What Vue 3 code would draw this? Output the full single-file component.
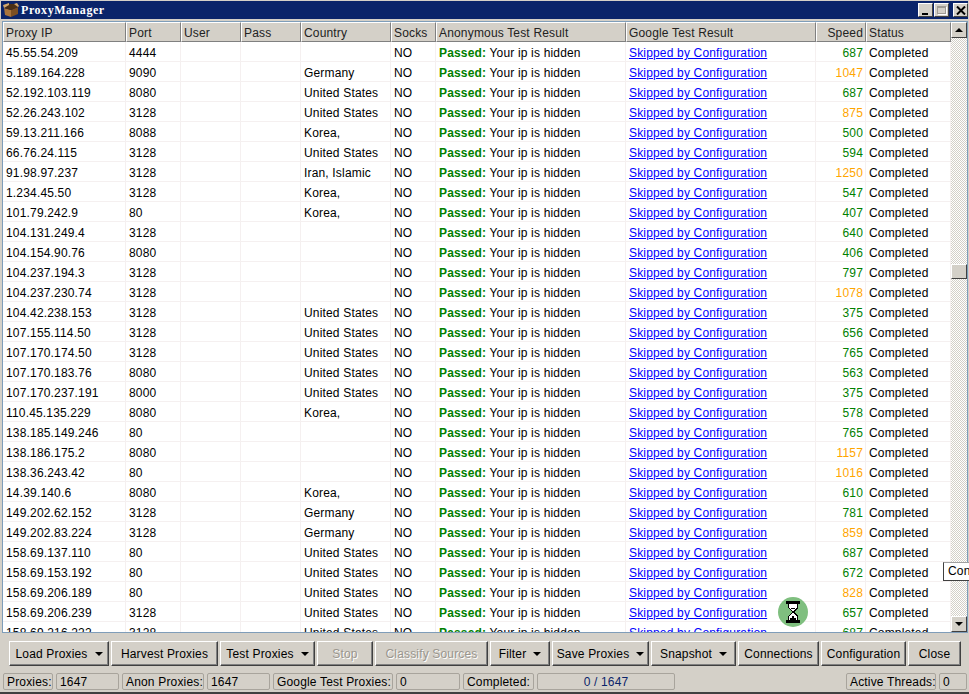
<template>
  <div class="win">
    <div class="titlebar">
      <svg class="app-icon" width="16" height="16" viewBox="0 0 16 16">
        <path d="M1 6 L8 8 L8 15 L2 13 Z" fill="#a8743c" />
        <path d="M8 8 L15 5 L15 12 L8 15 Z" fill="#7c4f22" />
        <path d="M1 6 L6 2 L12 2 L15 5 L8 8 Z" fill="#4a2f14" />
        <path d="M1 6 L0 3 L6 1 L6 3 Z" fill="#d2a76c" />
        <path d="M11 2 L14 1 L16 4 L15 5 Z" fill="#d2a76c" />
      </svg>
      <span class="title">ProxyManager</span>
      <div class="caption-btns">
        <span class="cap"><i class="min-glyph"></i></span>
        <span class="cap cap-max"><i class="max-glyph"></i></span>
        <span class="cap cap-close">
          <svg width="10" height="9" viewBox="0 0 10 9"><path d="M1 0.5 L9 8.5 M9 0.5 L1 8.5" stroke="#000" stroke-width="2" /></svg>
        </span>
      </div>
    </div>

    <div class="panel">
      <div class="table">
        <div class="thead">
          <div v-for="c in columns" :key="c.label" class="th" :class="{ right: c.right }">{{ c.label }}</div>
        </div>
        <div class="tbody">
          <div v-for="r in rows" :key="r.ip" class="tr">
            <div class="td">{{ r.ip }}</div>
            <div class="td">{{ r.port }}</div>
            <div class="td"></div>
            <div class="td"></div>
            <div class="td">{{ r.country }}</div>
            <div class="td">NO</div>
            <div class="td"><b class="passed">Passed:</b> Your ip is hidden</div>
            <div class="td"><a class="link">Skipped by Configuration</a></div>
            <div class="td right" :class="r.speed >= 800 ? 'slow' : 'fast'">{{ r.speed }}</div>
            <div class="td">Completed</div>
          </div>
        </div>
      </div>
      <div class="scrollbar">
        <span class="sb-btn"><i class="arrow-up"></i></span>
        <div class="sb-track"><span class="sb-thumb"></span></div>
        <span class="sb-btn"><i class="arrow-down"></i></span>
      </div>
    </div>

    <div class="toolbar">
      <button v-for="b in buttons" :key="b.label" class="btn" :class="b.cls" :disabled="b.disabled">
        <span>{{ b.label }}</span>
        <i v-if="b.menu" class="caret"></i>
      </button>
    </div>

    <div class="statusbar">
      <span class="cell s-proxies">Proxies:</span>
      <span class="cell s-val1">1647</span>
      <span class="cell s-anon">Anon Proxies:</span>
      <span class="cell s-val1">1647</span>
      <span class="cell s-google">Google Test Proxies:</span>
      <span class="cell s-val2">0</span>
      <span class="cell s-done">Completed:</span>
      <span class="cell s-progress">0 / 1647</span>
      <span class="s-spacer"></span>
      <span class="cell s-active">Active Threads:</span>
      <span class="cell s-threads">0</span>
    </div>

    <div class="tooltip">Configuration</div>
    <div class="busy">
      <svg width="16" height="22" viewBox="0 0 16 22" shape-rendering="crispEdges">
        <path d="M1 0 H15 V3 H13 V7 L9 11 L13 15 V19 H15 V22 H1 V19 H3 V15 L7 11 L3 7 V3 H1 Z" fill="#000" />
        <path d="M4 3 H12 V7 L8 10 L4 7 Z" fill="#fff" />
        <path d="M4 15 L8 12 L12 15 V19 H4 Z" fill="#fff" />
        <path d="M6 7 H10 V8 H6 Z M5 17 H11 V19 H5 Z M7 15 H9 V17 H7 Z" fill="#000" />
      </svg>
    </div>
  </div>
</template>

<script setup>
const US = 'United States'

const columns = [
  { label: 'Proxy IP' },
  { label: 'Port' },
  { label: 'User' },
  { label: 'Pass' },
  { label: 'Country' },
  { label: 'Socks' },
  { label: 'Anonymous Test Result' },
  { label: 'Google Test Result' },
  { label: 'Speed', right: true },
  { label: 'Status' },
]

const rows = [
  ['45.55.54.209', 4444, '', 687],
  ['5.189.164.228', 9090, 'Germany', 1047],
  ['52.192.103.119', 8080, US, 687],
  ['52.26.243.102', 3128, US, 875],
  ['59.13.211.166', 8088, 'Korea,', 500],
  ['66.76.24.115', 3128, US, 594],
  ['91.98.97.237', 3128, 'Iran, Islamic', 1250],
  ['1.234.45.50', 3128, 'Korea,', 547],
  ['101.79.242.9', 80, 'Korea,', 407],
  ['104.131.249.4', 3128, '', 640],
  ['104.154.90.76', 8080, '', 406],
  ['104.237.194.3', 3128, '', 797],
  ['104.237.230.74', 3128, '', 1078],
  ['104.42.238.153', 3128, US, 375],
  ['107.155.114.50', 3128, US, 656],
  ['107.170.174.50', 3128, US, 765],
  ['107.170.183.76', 8080, US, 563],
  ['107.170.237.191', 8000, US, 375],
  ['110.45.135.229', 8080, 'Korea,', 578],
  ['138.185.149.246', 80, '', 765],
  ['138.186.175.2', 8080, '', 1157],
  ['138.36.243.42', 80, '', 1016],
  ['14.39.140.6', 8080, 'Korea,', 610],
  ['149.202.62.152', 3128, 'Germany', 781],
  ['149.202.83.224', 3128, 'Germany', 859],
  ['158.69.137.110', 80, US, 687],
  ['158.69.153.192', 80, US, 672],
  ['158.69.206.189', 80, US, 828],
  ['158.69.206.239', 3128, US, 657],
  ['158.69.216.222', 3128, US, 687],
].map(([ip, port, country, speed]) => ({ ip, port, country, speed }))

const buttons = [
  { label: 'Load Proxies', menu: true, cls: 'b-load' },
  { label: 'Harvest Proxies', cls: 'b-harvest' },
  { label: 'Test Proxies', menu: true, cls: 'b-test' },
  { label: 'Stop', disabled: true, cls: 'b-stop' },
  { label: 'Classify Sources', disabled: true, cls: 'b-classify' },
  { label: 'Filter', menu: true, cls: 'b-filter' },
  { label: 'Save Proxies', menu: true, cls: 'b-save' },
  { label: 'Snapshot', menu: true, cls: 'b-snap' },
  { label: 'Connections', cls: 'b-conn' },
  { label: 'Configuration', cls: 'b-config' },
  { label: 'Close', cls: 'b-close' },
]
</script>

<style>
html, body { margin: 0; overflow: hidden; background: #d4d0c8; }
</style>

<style scoped>
.win {
  position: relative;
  width: 969px;
  height: 694px;
  box-sizing: border-box;
  display: flex;
  flex-direction: column;
  overflow: hidden;
  background: #d4d0c8;
  border-bottom: 2px solid #404040;
  padding-top: 1px;
  font-family: "Liberation Sans", Arial, sans-serif;
  font-size: 12px;
  letter-spacing: 0.17px;
  color: #000;
}

.titlebar {
  height: 18px;
  margin: 0 1px;
  background: #0a246a;
  display: flex;
  align-items: center;
  padding-left: 2px;
}
.app-icon { flex: none; }
.title {
  margin-left: 2px;
  color: #fff;
  font-family: "Liberation Serif", serif;
  font-weight: bold;
  font-size: 12px;
  letter-spacing: 0.55px;
}
.caption-btns { margin-left: auto; display: flex; gap: 1px; }
.cap {
  width: 15px;
  height: 14px;
  box-sizing: border-box;
  background: #d4d0c8;
  border: 1px solid;
  border-color: #fff #404040 #404040 #fff;
  display: flex;
  align-items: center;
  justify-content: center;
  position: relative;
}
.cap-close { margin-left: 3px; }
.min-glyph { position: absolute; left: 3px; bottom: 1px; width: 6px; height: 2px; background: #000; }
.max-glyph { width: 9px; height: 8px; box-sizing: border-box; border: 1px solid #a09c94; border-top-width: 2px; box-shadow: 1px 1px 0 #fff; }

.panel {
  height: 612px;
  margin: 2px 1px 0 2px;
  box-sizing: border-box;
  border: 1px solid #7f9db9;
  background: #fff;
  display: flex;
  overflow: hidden;
}
.table { width: 948px; flex: none; display: flex; flex-direction: column; }
.thead, .tr {
  display: grid;
  grid-template-columns: 123px 55px 60px 60px 90px 45px 190px 190px 50px 85px;
}
.thead { height: 20px; flex: none; background: #d4d0c8; }
.th {
  box-sizing: border-box;
  border: 1px solid;
  border-color: #fff #808080 #808080 #fff;
  padding: 0 2px;
  line-height: 20px;
  height: 20px;
  white-space: nowrap;
  overflow: hidden;
  color: #222;
}
.th:not(.right) { padding-left: 2px; }
.tr { height: 20px; }
.td {
  box-sizing: border-box;
  height: 20px;
  border-right: 1px solid #f5f0f0;
  border-bottom: 1px solid #f5f0f0;
  padding: 0 2px 0 3px;
  line-height: 23px;
  white-space: nowrap;
  overflow: hidden;
}
.right { text-align: right; }
.passed { color: #008000; }
.link { color: #0000ff; text-decoration: underline; }
.fast { color: #008000; }
.slow { color: #ffa500; }

.scrollbar { width: 16px; flex: none; display: flex; flex-direction: column; }
.sb-btn {
  flex: none;
  height: 16px;
  box-sizing: border-box;
  background: #d4d0c8;
  border: 1px solid;
  border-color: #fff #404040 #404040 #fff;
  display: flex;
  align-items: center;
  justify-content: center;
}
.arrow-up, .arrow-down { width: 0; height: 0; border-left: 4px solid transparent; border-right: 4px solid transparent; }
.arrow-up { border-bottom: 4px solid #000; }
.arrow-down { border-top: 4px solid #000; }
.sb-track {
  flex: 1;
  position: relative;
  background: repeating-conic-gradient(#d4d0c8 0 25%, #fff 0 50%) 0 0 / 2px 2px;
}
.sb-thumb {
  position: absolute;
  left: 0;
  top: 226px;
  width: 16px;
  height: 15px;
  box-sizing: border-box;
  background: #d4d0c8;
  border: 1px solid;
  border-color: #fff #404040 #404040 #fff;
}

.toolbar {
  height: 40px;
  box-sizing: border-box;
  flex: none;
  padding: 8px 0 0 9px;
  display: flex;
  gap: 2px;
}
.btn {
  height: 25px;
  box-sizing: border-box;
  flex: none;
  padding: 0;
  background: #d4d0c8;
  border: 1px solid;
  border-color: #fff #404040 #404040 #fff;
  box-shadow: inset -1px -1px 0 #808080;
  font: inherit;
  letter-spacing: inherit;
  color: #000;
  display: flex;
  align-items: center;
  justify-content: center;
  gap: 7px;
}
.btn:disabled { color: #9a968e; text-shadow: 1px 1px 0 #fff; }
.caret { width: 0; height: 0; border-left: 4px solid transparent; border-right: 4px solid transparent; border-top: 4px solid #000; }
.b-load { width: 100px; }
.b-harvest { width: 107px; }
.b-test { width: 95px; }
.b-stop { width: 56px; }
.b-classify { width: 113px; }
.b-filter { width: 60px; }
.b-save { width: 97px; }
.b-snap { width: 85px; }
.b-conn { width: 81px; }
.b-config { width: 85px; }
.b-close { width: 53px; }

.statusbar {
  flex: 1;
  display: flex;
  align-items: flex-start;
  gap: 3px;
  padding-left: 3px;
  padding-right: 2px;
}
.cell {
  height: 17px;
  box-sizing: border-box;
  flex: none;
  border: 1px solid #a8a49c;
  border-radius: 2px;
  line-height: 16px;
  padding-left: 3px;
  white-space: nowrap;
  overflow: hidden;
}
.s-proxies { width: 50px; }
.s-val1 { width: 63px; }
.s-anon { width: 82px; }
.s-google { width: 120px; }
.s-val2 { width: 64px; }
.s-done { width: 71px; }
.s-progress { width: 138px; padding: 0; text-align: center; color: #0a246a; }
.s-spacer { flex: 1; }
.s-active { width: 90px; }
.s-threads { width: 28px; }

.tooltip {
  position: absolute;
  left: 943px;
  top: 562px;
  width: 80px;
  height: 19px;
  box-sizing: border-box;
  background: #fff;
  border: 1px solid #404040;
  border-top-color: #a0a0a0;
  padding-left: 4px;
  line-height: 17px;
  white-space: nowrap;
}
.busy {
  position: absolute;
  left: 778px;
  top: 597px;
  width: 30px;
  height: 30px;
  border-radius: 50%;
  background: #7fbf7f;
  display: flex;
  align-items: center;
  justify-content: center;
}
</style>
